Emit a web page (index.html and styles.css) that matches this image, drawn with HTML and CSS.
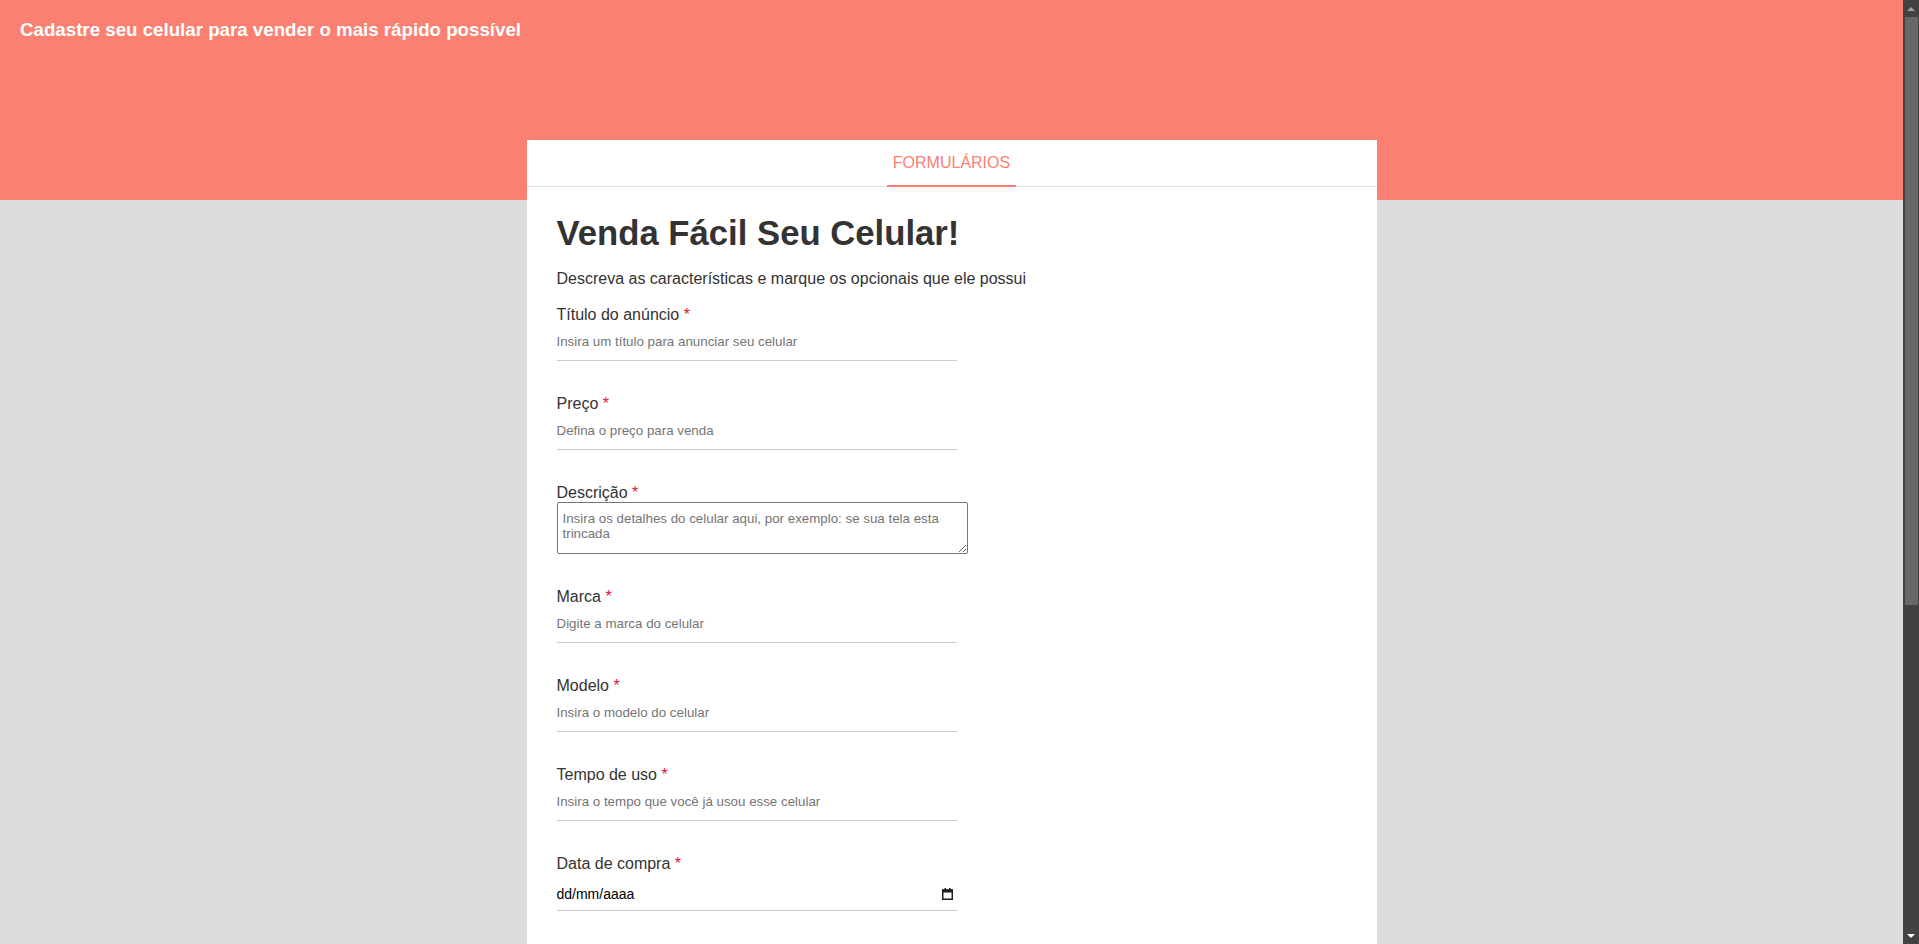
FILE: index.html
```html
<!DOCTYPE html>
<html lang="pt-BR">
<head>
<meta charset="utf-8">
<title>Venda Fácil Seu Celular</title>
<link rel="stylesheet" href="styles.css">
</head>
<body>
<div class="page">
  <header class="topbar">
    <h3 class="topbar-title">Cadastre seu celular para vender o mais rápido possível</h3>
  </header>
  <main class="card">
    <nav class="tabs"><span class="tab tab-active">FORMULÁRIOS</span></nav>
    <form class="form">
      <h1 class="form-title">Venda Fácil Seu Celular!</h1>
      <p class="form-desc">Descreva as características e marque os opcionais que ele possui</p>

      <div class="field">
        <label class="field-label">Título do anúncio <span class="req">*</span></label>
        <input class="field-input" type="text" placeholder="Insira um título para anunciar seu celular">
      </div>
      <div class="field">
        <label class="field-label">Preço <span class="req">*</span></label>
        <input class="field-input" type="text" placeholder="Defina o preço para venda">
      </div>
      <div class="field field-tall">
        <label class="field-label">Descrição <span class="req">*</span></label>
        <textarea class="field-area" placeholder="Insira os detalhes do celular aqui, por exemplo: se sua tela esta trincada"></textarea>
      </div>
      <div class="field">
        <label class="field-label">Marca <span class="req">*</span></label>
        <input class="field-input" type="text" placeholder="Digite a marca do celular">
      </div>
      <div class="field">
        <label class="field-label">Modelo <span class="req">*</span></label>
        <input class="field-input" type="text" placeholder="Insira o modelo do celular">
      </div>
      <div class="field">
        <label class="field-label">Tempo de uso <span class="req">*</span></label>
        <input class="field-input" type="text" placeholder="Insira o tempo que você já usou esse celular">
      </div>
      <div class="field field-last">
        <label class="field-label">Data de compra <span class="req">*</span></label>
        <div class="field-date">
          <span class="date-text">dd/mm/aaaa</span>
          <svg class="date-icon" width="11" height="12" viewBox="0 0 11 12" aria-hidden="true">
            <rect x="0.75" y="2" width="9.5" height="9.25" fill="none" stroke="#1f1f1f" stroke-width="1.5"/>
            <rect x="0" y="1.5" width="11" height="3" fill="#1f1f1f"/>
            <rect x="2.5" y="0" width="1.5" height="2" fill="#1f1f1f"/>
            <rect x="7" y="0" width="1.5" height="2" fill="#1f1f1f"/>
          </svg>
        </div>
      </div>
    </form>
  </main>
</div>
<div class="scrollbar" aria-hidden="true">
  <div class="sb-btn">
    <svg width="8" height="4" viewBox="0 0 8 4"><polygon points="0,4 4,0 8,4" fill="#a3a3a3"/></svg>
  </div>
  <div class="sb-thumb"></div>
  <div class="sb-btn sb-btn-down">
    <svg width="8" height="4" viewBox="0 0 8 4"><polygon points="0,0 8,0 4,4" fill="#ffffff"/></svg>
  </div>
</div>
</body>
</html>
```
FILE: styles.css
```css
html, body {
  margin: 0;
  padding: 0;
}
body {
  background: #dddddd;
  font-family: "Liberation Sans", Arial, sans-serif;
  color: #333333;
}
.page {
  margin-right: 16px;
  padding-bottom: 60px;
}

/* drawn scrollbar (overlays the right edge of the window) */
.scrollbar {
  position: fixed;
  top: 0;
  right: 0;
  bottom: 0;
  width: 16px;
  background: #424242;
  display: flex;
  flex-direction: column;
}
.sb-btn {
  height: 17px;
  display: flex;
  align-items: center;
  justify-content: center;
  flex: none;
}
.sb-btn svg {
  display: block;
}
.sb-btn-down {
  margin-top: auto;
}
.sb-thumb {
  height: 588px;
  margin: 0 1px 0 2px;
  background: #686868;
  flex: none;
}

.topbar {
  height: 200px;
  box-sizing: border-box;
  background: #fa8072;
  padding: 19px 20px 0;
}
.topbar-title {
  margin: 0;
  font-size: 18.72px;
  font-weight: bold;
  color: #ffffff;
}

.card {
  width: 850px;
  margin: -60px auto 0;
  background: #ffffff;
}
.tabs {
  display: flex;
  justify-content: center;
  height: 47px;
  box-sizing: border-box;
  border-bottom: 1px solid #e0e0e0;
}
.tab {
  display: flex;
  align-items: center;
  padding: 0 6px;
  margin-bottom: -1px;
  font-size: 16px;
  color: #fa8072;
  border-bottom: 2px solid #fa8072;
}

.form {
  padding: 27px 30px 500px;
}
.form-title {
  margin: 0 0 17px;
  font-size: 34.7px;
  font-weight: bold;
  color: #333333;
}
.form-desc {
  margin: 0 0 18px;
  font-size: 16px;
  color: #333333;
}
.field {
  margin-bottom: 34.5px;
}
.field-tall {
  margin-bottom: 34px;
}
.field-last {
  margin-bottom: 0;
}
.field-label {
  display: block;
  font-size: 16px;
  color: #333333;
}
.req {
  color: #e0103c;
}
.field-input {
  display: block;
  width: 400px;
  height: 36.5px;
  box-sizing: border-box;
  margin: 0;
  padding: 0;
  border: 0;
  border-bottom: 1px solid #cccccc;
  outline: none;
  background: transparent;
  font-family: "Liberation Sans", Arial, sans-serif;
  font-size: 13.33px;
  color: #333333;
}
.field-input::placeholder,
.field-area::placeholder {
  color: #757575;
}
.field-area {
  display: block;
  width: 411px;
  height: 52px;
  box-sizing: border-box;
  margin: 0;
  padding: 8px 5px;
  border: 1px solid #767676;
  border-radius: 2px;
  font-family: "Liberation Sans", Arial, sans-serif;
  font-size: 13.33px;
  line-height: 15px;
  color: #333333;
}
.field-date {
  display: flex;
  align-items: center;
  justify-content: space-between;
  width: 400px;
  height: 38px;
  box-sizing: border-box;
  padding: 4px 4px 0 0;
  border-bottom: 1px solid #cccccc;
  font-size: 14px;
  color: #000000;
}
.date-icon {
  display: block;
}
```
